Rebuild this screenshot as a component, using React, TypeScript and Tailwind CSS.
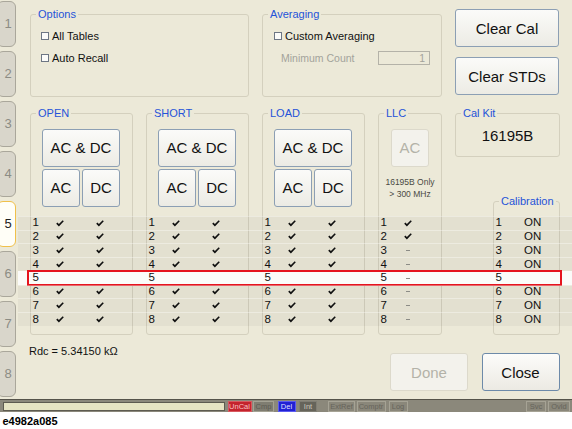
import React from 'react'
import clsx from 'clsx'

const ROWS = [1, 2, 3, 4, 5, 6, 7, 8]

function Check() {
  return (
    <svg width="8" height="7" viewBox="0 0 8 7" className="block">
      <path d="M0.2 3.7 L1.4 2.6 L2.9 4 L6.7 0.2 L7.8 1.2 L2.9 6.4 Z" fill="#111" />
    </svg>
  )
}

function Dash() {
  return <span className="block h-[1px] w-[4px] bg-[#8c8c86]" />
}

function Btn({
  children,
  className,
  disabled,
  focused,
}: {
  children: React.ReactNode
  className?: string
  disabled?: boolean
  focused?: boolean
}) {
  return (
    <button
      type="button"
      className={clsx(
        'flex items-center justify-center rounded-[3px] border leading-none',
        disabled
          ? 'border-[#dcd9cb] bg-[#f3f2ec] text-[#b3b2a8]'
          : focused
            ? 'border-[#6d8aa9] bg-gradient-to-b from-[#fcfcfa] to-[#eceae3] text-[#111]'
            : 'border-[#8c9fb4] bg-gradient-to-b from-[#fbfbf9] to-[#ecebe4] text-[#111]',
        className,
      )}
    >
      {children}
    </button>
  )
}

function Group({
  title,
  className,
  children,
}: {
  title: string
  className?: string
  children?: React.ReactNode
}) {
  return (
    <fieldset className={clsx('rounded-[3px] border border-[#d4d0be]', className)}>
      <legend className="ml-[5px] px-[2px] text-[11px] leading-[13px] text-[#2553d9]">{title}</legend>
      {children}
    </fieldset>
  )
}

function Box() {
  return <span className="h-[8px] w-[8px] border border-[#6d7684] bg-[#fbfbf9]" />
}

function TabStrip() {
  return (
    <div className="flex w-[18px] shrink-0 flex-col gap-[4px] pt-[1px]">
      {ROWS.map((n) => (
        <div
          key={n}
          className={clsx(
            '-ml-[3px] flex h-[46px] w-[19px] items-center justify-center rounded-[6px] border pl-[3px] text-[13px]',
            n === 5
              ? 'border-[#f0c04a] bg-[#fffef7] text-[#222]'
              : 'border-[#aaa79b] bg-[#d9d6cb] text-[#8c8c84]',
          )}
        >
          {n}
        </div>
      ))}
    </div>
  )
}

function StdButtons() {
  return (
    <div className="ml-[11px] mt-[9px] flex w-[78px] flex-col gap-[2px]">
      <Btn className="h-[38px] w-full text-[15px]">AC &amp; DC</Btn>
      <div className="flex gap-[2px]">
        <Btn className="h-[38px] w-[38px] text-[15px]">AC</Btn>
        <Btn className="h-[38px] w-[38px] text-[15px]">DC</Btn>
      </div>
    </div>
  )
}

function StdCells({ n }: { n: number }) {
  const on = n !== 5
  return (
    <div className="flex w-[103px] items-center">
      <span className="w-[26px] pl-[2.5px]">{n}</span>
      <span className="flex w-[8px] justify-center">{on && <Check />}</span>
      <span className="ml-[32px] flex w-[8px] justify-center">{on && <Check />}</span>
    </div>
  )
}

function Row({ n }: { n: number }) {
  const sel = n === 5
  return (
    <div
      className={clsx(
        'relative flex h-[13.75px] items-center gap-[13px] border-t pl-[12px] text-[11.5px] leading-none text-[#111]',
        sel ? 'border-[#fbfbf9] bg-[#fbfbf9]' : 'border-white/35 bg-black/[0.035]',
      )}
    >
      <StdCells n={n} />
      <StdCells n={n} />
      <StdCells n={n} />
      <div className="flex w-[64px] items-center">
        <span className="w-[26px] pl-[2.5px]">{n}</span>
        <span className="flex w-[8px] justify-center">{n <= 2 ? <Check /> : <Dash />}</span>
      </div>
      <div className="flex w-[105px] items-center">
        <span className="w-[69px] pl-[40.5px]">{n}</span>
        <span>{sel ? '' : 'ON'}</span>
      </div>
      {sel && (
        <div className="absolute -bottom-[1px] -top-[2px] left-[9px] right-[10px] border-2 border-[#e5141e]" />
      )}
    </div>
  )
}

function StatusBar() {
  return (
    <div className="flex h-[13px] items-center border-t border-[#55534a] bg-[#8b887b] pl-[2.5px] text-[7.5px] leading-[9px]">
      <div className="h-[9px] w-[222px] border border-[#5d5b50] bg-[#e6e4c3]" />
      <span className="ml-[3px] w-[24px] border border-[#d8595f] bg-[#c4232d] text-center text-[#f6c2c2]">UnCal</span>
      <span className="ml-[1.5px] w-[21px] border border-[#a4a294] bg-[#7f7d71] text-center text-[#5c5a51]">Cmp</span>
      <span className="ml-[3.5px] w-[18px] border border-[#5b5bf0] bg-[#2121d4] text-center text-[#dedeff]">Del</span>
      <span className="ml-[3.5px] w-[18px] border border-[#807e74] bg-[#66645a] text-center text-[#c9c7bd]">Int</span>
      <span className="ml-[11px] w-[27px] border border-[#a6a395] bg-[#8a877a] text-center text-[#66645a]">ExtRef</span>
      <span className="ml-[1.5px] w-[29px] border border-[#a6a395] bg-[#8a877a] text-center text-[#66645a]">Comptr</span>
      <span className="ml-[3px] w-[19px] border border-[#a6a395] bg-[#8a877a] text-center text-[#66645a]">Log</span>
      <span className="ml-auto w-[20px] border border-[#a6a395] bg-[#8a877a] text-center text-[#66645a]">Svc</span>
      <span className="ml-[2px] mr-[2px] w-[22px] border border-[#a6a395] bg-[#8a877a] text-center text-[#66645a]">Ovld</span>
    </div>
  )
}

export default function App() {
  return (
    <div className="h-[429px] w-[572px] overflow-hidden bg-white font-['Liberation_Sans',Arial,sans-serif]">
      <div className="flex h-[399px] bg-[#ece9d8]">
        <TabStrip />

        <div className="flex min-w-0 flex-1 flex-col pt-[8px]">
          {/* options / averaging / clear */}
          <div className="flex gap-[13px] pl-[12px]">
            <Group title="Options" className="h-[89px] w-[219px]">
              <div className="flex flex-col gap-[8px] pl-[10px] pt-[8px] text-[11px] leading-[14px] text-[#111]">
                <label className="flex items-center gap-[3px]">
                  <Box />
                  All Tables
                </label>
                <label className="flex items-center gap-[3px]">
                  <Box />
                  Auto Recall
                </label>
              </div>
            </Group>

            <Group title="Averaging" className="h-[89px] w-[180px]">
              <div className="flex flex-col gap-[8px] pt-[8px] text-[11px] leading-[14px]">
                <label className="flex items-center gap-[3px] pl-[11px] text-[#111]">
                  <Box />
                  Custom Averaging
                </label>
                <div className="flex items-center pl-[18px] text-[10.5px] text-[#a3a39b]">
                  <span className="w-[97px]">Minimum Count</span>
                  <span className="h-[14px] w-[52px] border border-[#b4b2a8] pr-[4px] text-right leading-[12px]">1</span>
                </div>
              </div>
            </Group>

            <div className="flex flex-col gap-[10px] pt-[1px]">
              <Btn className="h-[38px] w-[104px] text-[15px]">Clear Cal</Btn>
              <Btn className="h-[38px] w-[104px] text-[15px]">Clear STDs</Btn>
            </div>
          </div>

          {/* standards + table */}
          <div className="mt-[9.5px] grid">
            <div className="flex gap-[13px] pl-[12px] [grid-area:1/1]">
              <Group title="OPEN" className="h-[228px] w-[103px]">
                <StdButtons />
              </Group>
              <Group title="SHORT" className="h-[228px] w-[103px]">
                <StdButtons />
              </Group>
              <Group title="LOAD" className="h-[228px] w-[103px]">
                <StdButtons />
              </Group>
              <Group title="LLC" className="h-[228px] w-[64px]">
                <Btn disabled className="ml-[12px] mt-[9px] h-[38px] w-[38px] text-[15px]">
                  AC
                </Btn>
                <div className="mt-[9px] text-center text-[8.5px] leading-[12px] text-[#4a4a44]">
                  <div>16195B Only</div>
                  <div>&gt; 300 MHz</div>
                </div>
              </Group>
              <div className="flex h-[228px] w-[105px] flex-col">
                <Group title="Cal Kit" className="h-[50px] w-[105px]">
                  <div className="mt-[7px] text-center text-[15px] leading-[18px] text-[#111]">16195B</div>
                </Group>
                <Group title="Calibration" className="ml-[38px] mt-[38px] w-[67px] flex-1" />
              </div>
            </div>

            <div className="mt-[109.25px] flex flex-col self-start [grid-area:1/1]">
              {ROWS.map((n) => (
                <Row key={n} n={n} />
              ))}
            </div>
          </div>

          {/* Rdc + done / close */}
          <div className="flex justify-between pl-[11px] pr-[12.5px]">
            <div className="mt-[9.5px] text-[11px] leading-[14px] text-[#111]">Rdc = 5.34150 kΩ</div>
            <div className="mt-[18.5px] flex gap-[13.5px]">
              <Btn disabled className="h-[38px] w-[78px] text-[15px]">
                Done
              </Btn>
              <Btn focused className="h-[38px] w-[78px] text-[15px]">
                Close
              </Btn>
            </div>
          </div>
        </div>
      </div>

      <StatusBar />

      <div className="mt-[3px] pl-[2.5px] text-[11px] font-bold leading-[13px] text-black">e4982a085</div>
    </div>
  )
}
